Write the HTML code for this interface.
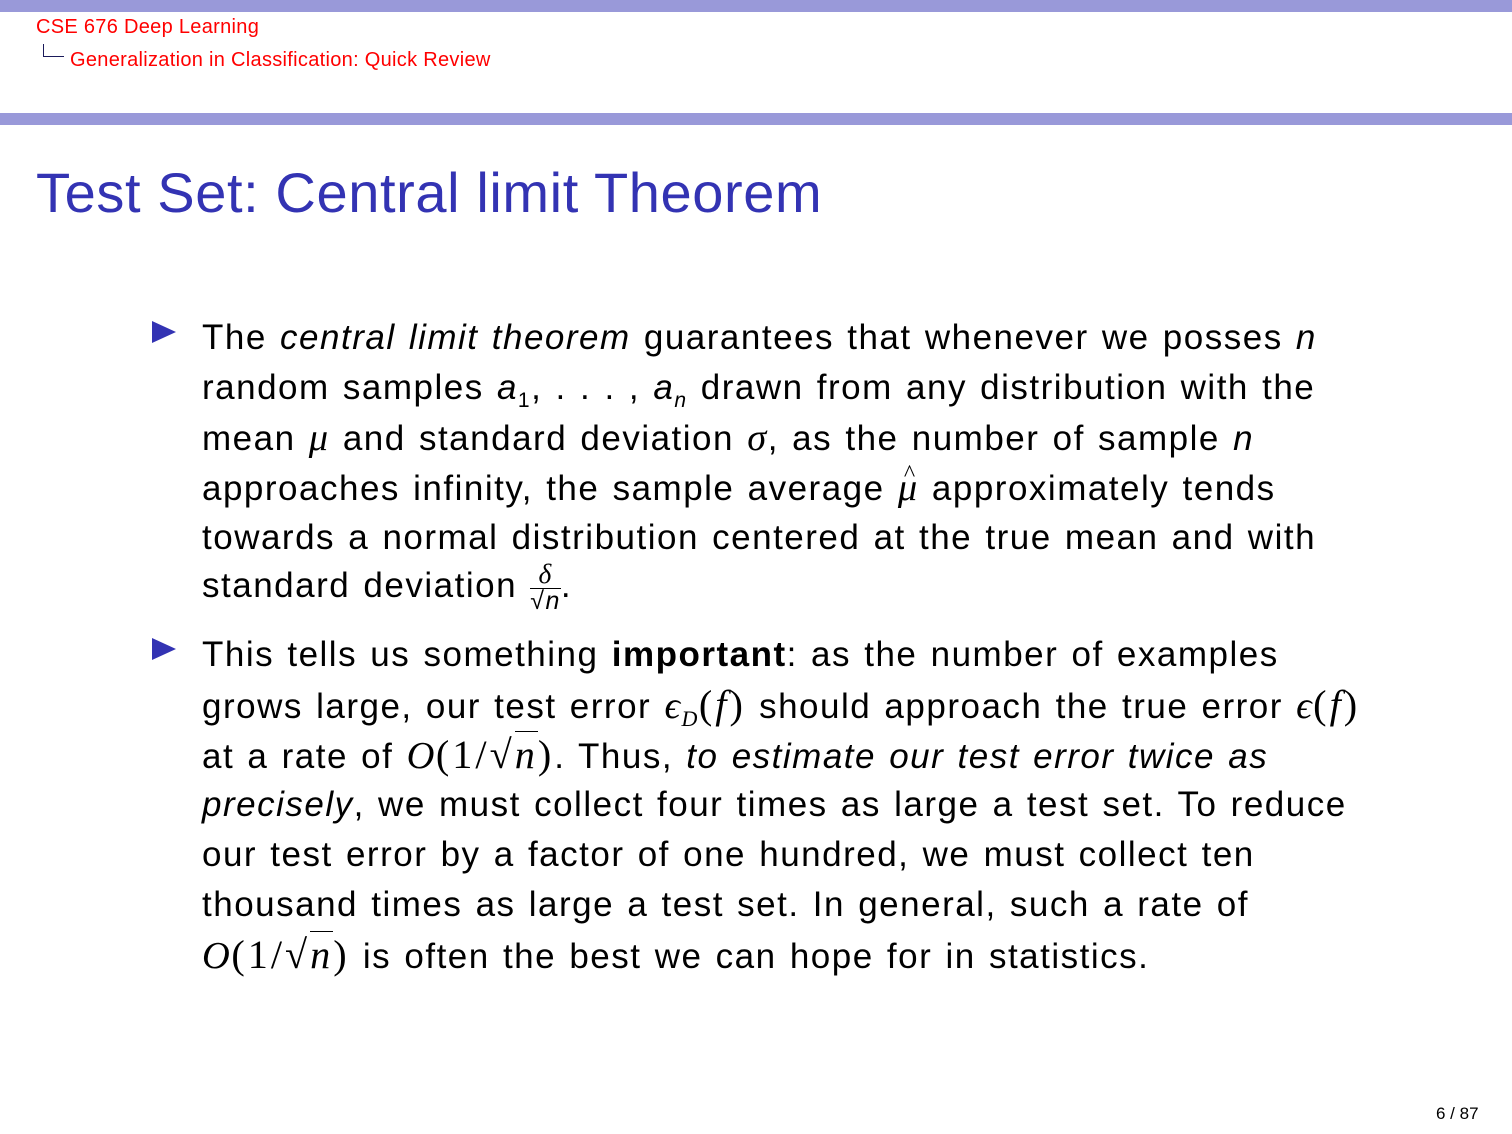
<!DOCTYPE html><html><head><meta charset="utf-8"><style>
body{margin:0;width:1512px;height:1134px;background:#fff;position:relative;overflow:hidden;font-family:"Liberation Sans",sans-serif}
.bar{position:absolute;left:0;width:1512px;height:12px;background:#9999d9}
.l{position:absolute;left:202px;font-size:35px;line-height:50px;white-space:nowrap;color:#000;letter-spacing:1.5px;word-spacing:2px}
.m{font-family:"Liberation Serif",serif;font-style:italic;font-size:1.1em}
.p{font-family:"Liberation Serif",serif;font-size:1.15em;letter-spacing:3px}
.tri{position:absolute;left:152px;width:0;height:0;border-top:11px solid transparent;border-bottom:11px solid transparent;border-left:24px solid #3333b3}
sub{font-size:60%}
.hat{position:relative;display:inline-block}
.hat:before{content:"^";position:absolute;left:6px;top:-14px;font-size:24px;font-style:normal}
</style></head><body>
<div class="bar" style="top:0"></div>
<div class="bar" style="top:113px"></div>
<div style="position:absolute;left:36px;top:16px;color:#f00;font-size:20px;letter-spacing:0.3px">CSE 676 Deep Learning</div>
<div style="position:absolute;left:43px;top:44px;width:20px;height:12px;border-left:1.5px solid #1a1a5a;border-bottom:1.5px solid #1a1a5a"></div>
<div style="position:absolute;left:70px;top:49px;color:#f00;font-size:20px;letter-spacing:0.3px">Generalization in Classification: Quick Review</div>
<div style="position:absolute;left:36px;top:160px;color:#3333b3;font-size:56px;letter-spacing:0.6px">Test Set: Central limit Theorem</div>
<div class="tri" style="top:321px"></div>
<div class="l" style="top:313px">The <i>central limit theorem</i> guarantees that whenever we posses <i>n</i></div>
<div class="l" style="top:363px">random samples <i>a</i><sub>1</sub>, . . . , <i>a<sub>n</sub></i> drawn from any distribution with the</div>
<div class="l" style="top:413px">mean <span class="m">μ</span> and standard deviation <span class="m">σ</span>, as the number of sample <i>n</i></div>
<div class="l" style="top:463px">approaches infinity, the sample average <span class="m hat">μ</span> approximately tends</div>
<div class="l" style="top:513px">towards a normal distribution centered at the true mean and with</div>
<div class="l" style="top:561px">standard deviation <span style="display:inline-block;vertical-align:middle;text-align:center;font-size:25px;line-height:25px"><span class="m">δ</span><br><span style="border-top:1.5px solid #000;display:inline-block">√<i>n</i></span></span>.</div>
<div class="tri" style="top:638px"></div>
<div class="l" style="top:630px">This tells us something <b>important</b>: as the number of examples</div>
<div class="l" style="top:680px">grows large, our test error <span class="m">ϵ</span><sub style="font-family:'Liberation Serif',serif;font-style:italic;font-size:22px">D</sub><span class="p">(<i>f</i>)</span> should approach the true error <span class="m">ϵ</span><span class="p">(<i>f</i>)</span></div>
<div class="l" style="top:730px">at a rate of <span class="m">O</span><span class="p">(1/√<span style="border-top:1.5px solid #000"><i>n</i></span>)</span>. Thus, <i>to estimate our test error twice as</i></div>
<div class="l" style="top:780px"><i>precisely</i>, we must collect four times as large a test set. To reduce</div>
<div class="l" style="top:830px">our test error by a factor of one hundred, we must collect ten</div>
<div class="l" style="top:880px">thousand times as large a test set. In general, such a rate of</div>
<div class="l" style="top:930px"><span class="m">O</span><span class="p">(1/√<span style="border-top:1.5px solid #000"><i>n</i></span>)</span> is often the best we can hope for in statistics.</div>
<div style="position:absolute;left:1436px;top:1104px;font-size:17px;color:#000">6 / 87</div>
</body></html>
